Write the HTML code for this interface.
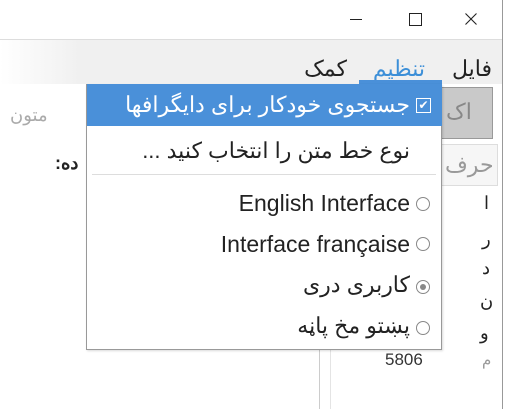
<!DOCTYPE html>
<html><head><meta charset="utf-8"><style>
body{margin:0;width:505px;height:409px;overflow:hidden;background:#fff;font-family:"Liberation Sans","Noto Sans CJK SC",sans-serif;position:relative}
.a{position:absolute}
.t{font-size:22px;line-height:26px;color:#222;white-space:nowrap;direction:rtl}
.e{font-size:23px;line-height:26px;color:#222;white-space:nowrap;text-align:right}
</style></head><body>
<div class="a" style="left:502px;top:0;width:1px;height:409px;background:#999"></div>
<div class="a" style="left:350px;top:19px;width:12px;height:1px;background:#222"></div>
<div class="a" style="left:409px;top:13px;width:11px;height:11px;border:1px solid #222"></div>
<svg class="a" style="left:465px;top:13px" width="12" height="12"><path d="M0.5 0.5L11.5 11.5M11.5 0.5L0.5 11.5" stroke="#222" stroke-width="1.1"/></svg>
<div class="a" style="left:0;top:39px;width:502px;height:44px;background:linear-gradient(to right,#fff 0,#f0f0f0 80px);border-top:1px solid #ddd"></div>
<div class="a t" style="right:13px;top:56px">فایل</div>
<div class="a t" style="right:80px;top:56px;color:#3c8fd8">تنظیم</div>
<div class="a t" style="right:158px;top:56px">کمک</div>
<div class="a" style="left:359px;top:80px;width:83px;height:4px;background:#4a90d9"></div>
<div class="a" style="left:441px;top:87px;width:50px;height:50px;background:#c9c9c9;border:1px solid #999"></div>
<div class="a t" style="left:446px;top:99px;color:#888">اک</div>
<div class="a t" style="left:10px;top:102px;color:#aaa;font-size:18px">متون</div>
<div class="a t" style="left:55px;top:150px;font-weight:bold;font-size:18px">ده:</div>
<div class="a" style="left:441px;top:144px;width:55px;height:40px;border:1px solid #ddd;background:#f6f6f6"></div>
<div class="a t" style="left:445px;top:152px;color:#999">حرف</div>
<div class="a t" style="left:484px;top:190px;font-size:18px">ا</div>
<div class="a t" style="left:482px;top:226px;font-size:18px">ر</div>
<div class="a t" style="left:482px;top:255px;font-size:18px">د</div>
<div class="a t" style="left:480px;top:288px;font-size:18px">ن</div>
<div class="a t" style="left:480px;top:320px;font-size:18px">و</div>
<div class="a t" style="left:482px;top:348px;font-size:15px;color:#999">م</div>
<div class="a" style="left:385px;top:350px;font-size:17px;color:#333">5806</div>
<div class="a" style="left:319px;top:349px;width:1px;height:60px;background:#ccc"></div>
<div class="a" style="left:330px;top:349px;width:1px;height:60px;background:#e4e4e4"></div>
<div class="a" style="left:86px;top:84px;width:354px;height:264px;background:#fff;border:1px solid #999;box-shadow:1px 1px 2px rgba(0,0,0,.15)"></div>
<div class="a" style="left:87px;top:84px;width:355px;height:42px;background:#4a90d9"></div>
<div class="a t" style="right:95px;top:92px;color:#fff">جستجوی خودکار برای دایگرافها</div>
<div class="a" style="left:416px;top:98px;width:13px;height:13px;border:1px solid #fff;color:#fff;font-size:12px;line-height:13px;text-align:center">✔</div>
<div class="a t" style="right:95px;top:138px">نوع خط متن را انتخاب کنید ...</div>
<div class="a" style="left:92px;top:174px;width:344px;height:1px;background:#ddd"></div>
<div class="a e" style="right:95px;top:190px">English Interface</div>
<div class="a e" style="right:95px;top:231px">Interface française</div>
<div class="a t" style="right:95px;top:272px">کاربری دری</div>
<div class="a t" style="right:95px;top:313px">پښتو مخ پاڼه</div>
<div class="a" style="left:416px;top:197px;width:12px;height:12px;border:1px solid #888;border-radius:50%"></div>
<div class="a" style="left:416px;top:237px;width:12px;height:12px;border:1px solid #888;border-radius:50%"></div>
<div class="a" style="left:416px;top:280px;width:12px;height:12px;border:1px solid #888;border-radius:50%"></div>
<div class="a" style="left:420px;top:284px;width:6px;height:6px;background:#888;border-radius:50%"></div>
<div class="a" style="left:416px;top:321px;width:12px;height:12px;border:1px solid #888;border-radius:50%"></div>
</body></html>
